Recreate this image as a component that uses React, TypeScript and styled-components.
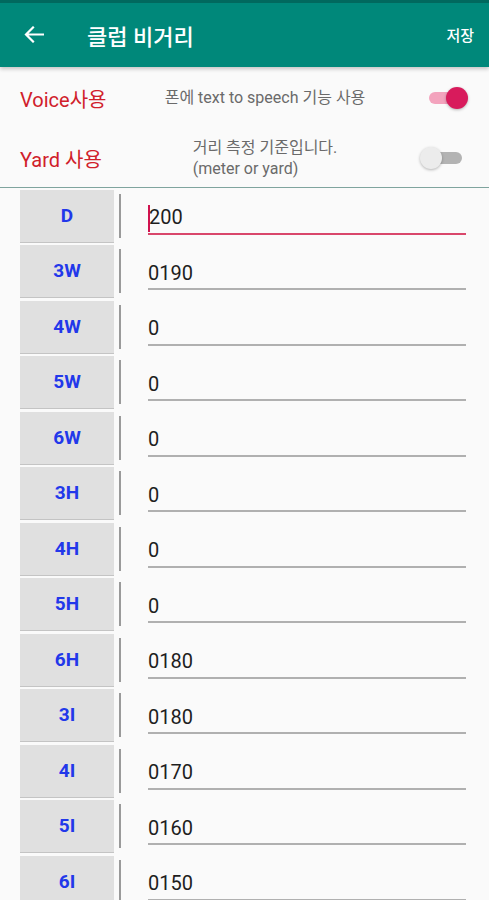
import styled, { createGlobalStyle } from 'styled-components'

type Club = {
  label: string
  value: string
  focused?: boolean
}

const clubs: Club[] = [
  { label: 'D', value: '200', focused: true },
  { label: '3W', value: '0190' },
  { label: '4W', value: '0' },
  { label: '5W', value: '0' },
  { label: '6W', value: '0' },
  { label: '3H', value: '0' },
  { label: '4H', value: '0' },
  { label: '5H', value: '0' },
  { label: '6H', value: '0180' },
  { label: '3I', value: '0180' },
  { label: '4I', value: '0170' },
  { label: '5I', value: '0160' },
  { label: '6I', value: '0150' },
]

const GlobalStyle = createGlobalStyle`
  html, body {
    margin: 0;
    padding: 0;
    background: #fafafa;
    overflow: hidden;
  }
  body {
    font-family: Roboto, "Noto Sans CJK KR", sans-serif;
  }
`

function BackArrow() {
  return (
    <svg width="20" height="17" viewBox="0 0 20 17" fill="none" aria-hidden="true">
      <path
        d="M19 8.5H2.5M9 1.5L2 8.5L9 15.5"
        stroke="#ffffff"
        strokeWidth="2.2"
        strokeLinecap="square"
        strokeLinejoin="miter"
      />
    </svg>
  )
}

export default function App() {
  return (
    <Screen>
      <GlobalStyle />
      <AppBar>
        <BackButton type="button" aria-label="뒤로">
          <BackArrow />
        </BackButton>
        <Title>클럽 비거리</Title>
        <SaveButton type="button">저장</SaveButton>
      </AppBar>

      <Settings>
        <SettingRow $height={61}>
          <SettingLabel>Voice사용</SettingLabel>
          <SettingDesc>폰에 text to speech 기능 사용</SettingDesc>
          <Switch $on>
            <SwitchTrack $on />
            <SwitchThumb $on />
          </Switch>
        </SettingRow>
        <SettingRow $height={59}>
          <SettingLabel>Yard 사용</SettingLabel>
          <SettingDesc>
            거리 측정 기준입니다.
            <br />
            (meter or yard)
          </SettingDesc>
          <Switch>
            <SwitchTrack />
            <SwitchThumb />
          </Switch>
        </SettingRow>
      </Settings>

      <ClubList>
        {clubs.map((club) => (
          <ClubRow key={club.label}>
            <ClubLabel>{club.label}</ClubLabel>
            <Divider />
            <Field $focused={club.focused}>
              {club.focused && <Caret />}
              {club.value}
            </Field>
          </ClubRow>
        ))}
      </ClubList>
    </Screen>
  )
}

const Screen = styled.div`
  width: 489px;
  height: 900px;
  overflow: hidden;
  background: #fafafa;
`

const AppBar = styled.header`
  position: relative;
  z-index: 1;
  display: flex;
  height: 67px;
  box-sizing: border-box;
  align-items: center;
  border-top: 3px solid #01695e;
  background: #00887a;
  box-shadow: 0 2px 4px rgb(0 0 0 / 22%);
  padding: 0 15px 0 24px;
`

const BackButton = styled.button`
  display: inline-flex;
  width: 20px;
  height: 17px;
  align-items: center;
  justify-content: center;
  border: 0;
  padding: 0;
  background: transparent;
  margin-top: -1px;

  svg {
    display: block;
  }
`

const Title = styled.h1`
  margin: -1px 0 0 43px;
  flex: 1;
  color: #ffffff;
  font-family: Roboto, "Noto Sans CJK KR", sans-serif;
  font-size: 22px;
  font-weight: 500;
`

const SaveButton = styled.button`
  border: 0;
  padding: 0;
  background: transparent;
  color: #ffffff;
  font-family: Roboto, "Noto Sans CJK KR", sans-serif;
  font-size: 15px;
  font-weight: 500;
  margin-top: -2px;
`

const Settings = styled.section`
  border-bottom: 1.5px solid #7fa49e;
`

const SettingRow = styled.div<{ $height: number }>`
  display: grid;
  grid-template-columns: 120px 250px 1fr;
  height: ${({ $height }) => $height}px;
  align-items: center;
  padding-left: 20px;
  box-sizing: border-box;
`

const SettingLabel = styled.span`
  color: #d0202a;
  font-family: Roboto, "Noto Sans CJK KR", sans-serif;
  font-size: 20px;
  margin-top: 1px;
`

const SettingDesc = styled.span`
  justify-self: center;
  color: #6a6a6a;
  font-family: Roboto, "Noto Sans CJK KR", sans-serif;
  font-size: 16px;
  line-height: 21px;
  text-align: left;
`

const Switch = styled.span<{ $on?: boolean }>`
  position: relative;
  display: block;
  width: 40px;
  height: 24px;
  margin-left: ${({ $on }) => ($on ? 39 : 40)}px;
`

const SwitchTrack = styled.span<{ $on?: boolean }>`
  position: absolute;
  top: 6px;
  left: ${({ $on }) => ($on ? 0 : 4)}px;
  width: ${({ $on }) => ($on ? 34 : 28)}px;
  height: 12px;
  border-radius: 6px;
  background: ${({ $on }) => ($on ? '#f3a3bd' : '#b3b3b3')};
`

const SwitchThumb = styled.span<{ $on?: boolean }>`
  position: absolute;
  top: 1px;
  left: ${({ $on }) => ($on ? 17 : -10)}px;
  width: 22px;
  height: 22px;
  border-radius: 50%;
  background: ${({ $on }) => ($on ? '#d81b5c' : '#ececec')};
  box-shadow: 0 1px 3px rgb(0 0 0 / 28%);
`

const ClubList = styled.div`
  display: flex;
  flex-direction: column;
  padding-top: 1.5px;
`

const ClubRow = styled.div`
  display: grid;
  grid-template-columns: 94px 5px 2px 27px 318px;
  height: 55.5px;
  flex: 0 0 55.5px;
  padding-left: 20px;
  box-sizing: border-box;
  align-items: start;
`

const ClubLabel = styled.div`
  display: flex;
  height: 53px;
  align-items: center;
  justify-content: center;
  box-sizing: border-box;
  border-bottom: 1.5px solid #c4c4c4;
  background: #e0e0e0;
  color: #2238ea;
  font-family: Roboto, sans-serif;
  font-size: 19px;
  font-weight: 700;
  padding-bottom: 1px;
`

const Divider = styled.span`
  grid-column: 3;
  display: block;
  height: 44px;
  margin-top: 4px;
  background: #9a9a9a;
`

const Field = styled.div<{ $focused?: boolean }>`
  grid-column: 5;
  display: flex;
  align-items: center;
  height: 31px;
  margin-top: 12px;
  border-bottom: 2px solid ${({ $focused }) => ($focused ? '#d9476b' : '#b0b0b0')};
  color: #1e1e1e;
  font-family: Roboto, sans-serif;
  font-size: 20px;
  line-height: 22px;
`

const Caret = styled.span`
  display: inline-block;
  width: 2px;
  height: 27px;
  margin-right: -1px;
  margin-top: 3px;
  background: #d0124f;
`
